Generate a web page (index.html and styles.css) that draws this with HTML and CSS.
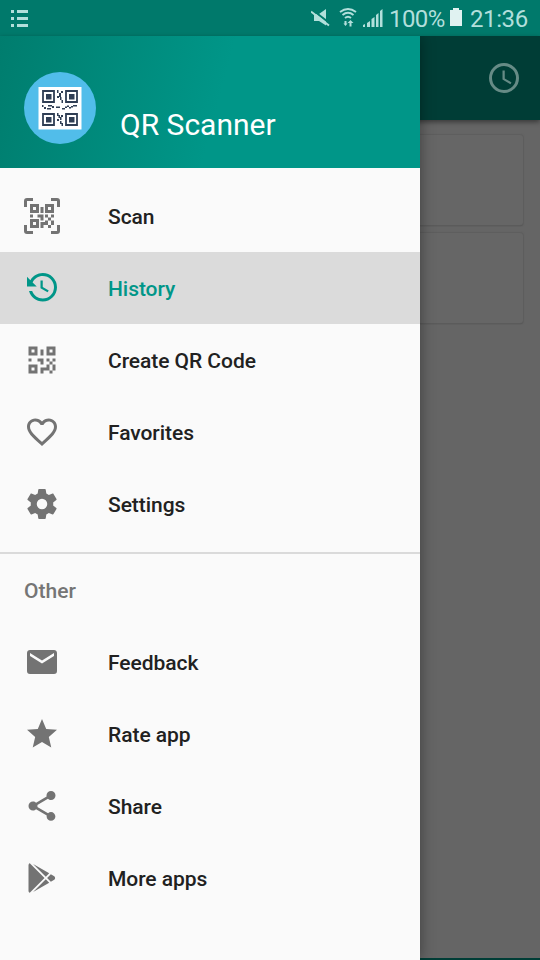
FILE: index.html
```html
<!DOCTYPE html>
<html lang="en">
<head>
<meta charset="utf-8">
<title>QR Scanner</title>
<link rel="stylesheet" href="styles.css">
</head>
<body>
<div class="phone">
  <header class="status">
    <svg class="status-list" width="20" height="18" viewBox="0 0 20 18" fill="currentColor"><path d="M0 0h3v3H0zM6 0h11v3H6zM0 7h3v3H0zM6 7h11v3H6zM0 14h3v3H0zM6 14h11v3H6z"/></svg>
    <svg class="status-icons" width="76" height="24" viewBox="0 0 76 24">
      <g fill="currentColor">
        <path d="M3 8h5l7-5v16.500L8 15H3z"/>
        <path d="M52 21v-2l2-1v3zM56 21v-4l3-2v6zM60.500 21v-8l3-2v10zM65 21V9l2.500-2v14zM69 21V5l2.500-2v18z"/>
        <path d="M39.500 14l3 3h-2v3.500h-2V17h-2zM34.500 20l-2-2.500h1V15h2v2.500h1z"/>
      </g>
      <path d="M1 3.500l18 14" stroke="#00796b" stroke-width="2"/>
      <g fill="none" stroke="currentColor" stroke-width="1.900"><path d="M0 5.500l18 14"/><path d="M29 6q8-6 16 0M31.500 9q5.500-4.500 11 0M34 12q3-2.500 6 0"/></g>
    </svg>
    <span class="percent">100%</span>
    <svg class="battery" width="12" height="18" viewBox="0 0 12 18" fill="#e0f2f1"><path d="M3 0h6v2h3v16H0V2h3z"/></svg>
    <span class="time">21:36</span>
  </header>
  <div class="stage">
    <main class="page">
      <div class="toolbar">
        <svg width="36" height="36" viewBox="0 0 24 24" fill="currentColor"><path d="M12,20A8,8 0 0,0 20,12A8,8 0 0,0 12,4A8,8 0 0,0 4,12A8,8 0 0,0 12,20M12,2A10,10 0 0,1 22,12A10,10 0 0,1 12,22A10,10 0 0,1 2,12A10,10 0 0,1 12,2M12.500,7V12.250L17,14.920L16.250,16.150L11,13V7H12.500Z"/></svg>
      </div>
      <div class="cards"><div class="card"></div><div class="card"></div></div>
      <div class="bottom-edge"></div>
    </main>
    <aside class="drawer">
      <div class="profile">
        <svg width="72" height="72" viewBox="0 0 72 72">
          <circle cx="36" cy="36" r="36" fill="#51bdea"/>
          <path fill="#fff" d="M14.500 15h43v42.500h-43z"/>
          <g fill="none" stroke="#2f3e54" stroke-width="1.800"><path d="M19 19h11v11H19zM42 19h11v11H42zM19 42h11v11H19zM42 42h11v11H42z"/></g>
          <g fill="#2f3e54"><path d="M22 22h5.500v5.500H22zM45 22h5.500v5.500H45zM22 45h5.500v5.500H22zM45 45h5.500v5.500H45z"/>
          <path d="M33 18h1.500v3H33zM37 19h2v2h-2zM35 21h2v4h-2zM33 24h2v2h-2zM36 25h1.500v3H36zM37.500 28H39v3h-1.500zM33 41h1.500v3H33zM34.500 43H36v3h-1.500zM37 43h2v2h-2zM36 45h1.500v3H36zM33 47h2v2h-2zM36 49h1.500v3H36zM37.500 51H39v3h-1.500z"/>
          <path d="M18 33h1.500v2H18zM20 35h2v2h-2zM23 36h4v1.500h-4zM24 33h4v1.500h-4zM28 34h2v2h-2zM32 34.500h4V36h-4zM38 36h3v1.500h-3zM41 34.500h2V36h-2zM43 33.500h2V35h-2zM45 35h2v1.500h-2zM47 34h2v1.500h-2zM49 33h4v1.500h-4z"/></g>
        </svg>
        <h1>QR Scanner</h1>
      </div>
      <nav class="menu">
        <a class="item"><svg viewBox="0 0 24 24"><path d="M4,4H10V10H4V4M20,4V10H14V4H20M14,15H16V13H14V11H16V13H18V11H20V13H18V15H20V18H18V20H16V18H13V20H11V16H14V15M16,15V18H18V15H16M4,20V14H10V20H4M6,6V8H8V6H6M16,6V8H18V6H16M6,16V18H8V16H6M4,11H6V13H4V11M9,11H13V15H11V13H9V11M11,6H13V10H11V6M2,2V6H0V2A2,2 0 0,1 2,0H6V2H2M22,0A2,2 0 0,1 24,2V6H22V2H18V0H22M2,18V22H6V24H2A2,2 0 0,1 0,22V18H2M22,22V18H24V22A2,2 0 0,1 22,24H18V22H22Z"/></svg><span>Scan</span></a>
        <a class="item active"><svg viewBox="0 0 24 24"><path d="M11,7V12.110L15.710,14.900L16.500,13.620L12.500,11.250V7M12.500,2C8.970,2 5.910,3.920 4.270,6.770L2,4.500V11H8.500L5.750,8.250C6.960,5.730 9.500,4 12.500,4A7.500,7.500 0 0,1 20,11.500A7.500,7.500 0 0,1 12.500,19C9.230,19 6.470,16.910 5.440,14H3.340C4.440,18.030 8.110,21 12.500,21C17.740,21 22,16.750 22,11.500A9.500,9.500 0 0,0 12.500,2Z"/></svg><span>History</span></a>
        <a class="item"><svg viewBox="0 0 24 24"><path d="M3,11H5V13H3V11M11,5H13V9H11V5M9,11H13V15H11V13H9V11M15,11H17V13H19V11H21V13H19V15H21V19H19V21H17V19H13V21H11V17H15V15H17V13H15V11M19,19V15H17V19H19M15,3H21V9H15V3M17,5V7H19V5H17M3,3H9V9H3V3M5,5V7H7V5H5M3,15H9V21H3V15M5,17V19H7V17H5Z"/></svg><span>Create QR Code</span></a>
        <a class="item"><svg viewBox="0 0 24 24"><path d="M12.100,18.550L12,18.650L11.890,18.550C7.140,14.240 4,11.390 4,8.500C4,6.500 5.500,5 7.500,5C9.040,5 10.540,6 11.070,7.360H12.930C13.460,6 14.960,5 16.500,5C18.500,5 20,6.500 20,8.500C20,11.390 16.860,14.240 12.100,18.550M16.500,3C14.760,3 13.090,3.810 12,5.080C10.910,3.810 9.240,3 7.500,3C4.420,3 2,5.410 2,8.500C2,12.270 5.400,15.360 10.550,20.030L12,21.350L13.450,20.030C18.600,15.360 22,12.270 22,8.500C22,5.410 19.580,3 16.500,3Z"/></svg><span>Favorites</span></a>
        <a class="item"><svg viewBox="0 0 24 24"><path d="M12,15.500A3.500,3.500 0 0,1 8.500,12A3.500,3.500 0 0,1 12,8.500A3.500,3.500 0 0,1 15.500,12A3.500,3.500 0 0,1 12,15.500M19.430,12.970C19.470,12.650 19.500,12.330 19.500,12C19.500,11.670 19.470,11.340 19.430,11L21.540,9.370C21.730,9.220 21.780,8.950 21.660,8.730L19.660,5.270C19.540,5.050 19.270,4.960 19.050,5.050L16.560,6.050C16.040,5.660 15.500,5.320 14.870,5.070L14.500,2.420C14.460,2.180 14.250,2 14,2H10C9.750,2 9.540,2.180 9.500,2.420L9.130,5.070C8.500,5.320 7.960,5.660 7.440,6.050L4.950,5.050C4.730,4.960 4.460,5.050 4.340,5.270L2.340,8.730C2.210,8.950 2.270,9.220 2.460,9.370L4.570,11C4.530,11.340 4.500,11.670 4.500,12C4.500,12.330 4.530,12.650 4.570,12.970L2.460,14.630C2.270,14.780 2.210,15.050 2.340,15.270L4.340,18.730C4.460,18.950 4.730,19.030 4.950,18.950L7.440,17.940C7.960,18.340 8.500,18.680 9.130,18.930L9.500,21.580C9.540,21.820 9.750,22 10,22H14C14.250,22 14.460,21.820 14.500,21.580L14.870,18.930C15.500,18.670 16.040,18.340 16.560,17.940L19.050,18.950C19.270,19.030 19.540,18.950 19.660,18.730L21.660,15.270C21.780,15.050 21.730,14.780 21.540,14.630L19.430,12.970Z"/></svg><span>Settings</span></a>
      </nav>
      <section class="other">
        <h2>Other</h2>
        <a class="item"><svg viewBox="0 0 24 24"><path d="M20,8L12,13L4,8V6L12,11L20,6M20,4H4C2.890,4 2,4.890 2,6V18A2,2 0 0,0 4,20H20A2,2 0 0,0 22,18V6C22,4.890 21.100,4 20,4Z"/></svg><span>Feedback</span></a>
        <a class="item"><svg viewBox="0 0 24 24"><path d="M12,17.270L18.180,21L16.540,13.970L22,9.240L14.810,8.620L12,2L9.190,8.620L2,9.240L7.450,13.970L5.820,21L12,17.270Z"/></svg><span>Rate app</span></a>
        <a class="item"><svg viewBox="0 0 24 24"><path d="M18,16.080C17.240,16.080 16.560,16.380 16.040,16.850L8.910,12.700C8.960,12.470 9,12.240 9,12C9,11.760 8.960,11.530 8.910,11.300L15.960,7.190C16.500,7.690 17.210,8 18,8A3,3 0 0,0 21,5A3,3 0 0,0 18,2A3,3 0 0,0 15,5C15,5.240 15.040,5.470 15.090,5.700L8.040,9.810C7.500,9.310 6.790,9 6,9A3,3 0 0,0 3,12A3,3 0 0,0 6,15C6.790,15 7.500,14.690 8.040,14.190L15.160,18.340C15.110,18.550 15.080,18.770 15.080,19C15.080,20.610 16.390,21.910 18,21.910C19.610,21.910 20.920,20.610 20.920,19A2.920,2.920 0 0,0 18,16.080Z"/></svg><span>Share</span></a>
        <a class="item"><svg viewBox="0 0 24 24"><path d="M3,20.500V3.500C3,2.910 3.340,2.390 3.840,2.150L13.690,12L3.840,21.850C3.340,21.600 3,21.090 3,20.500M16.810,15.120L6.050,21.340L14.540,12.850L16.810,15.120M20.160,10.810C20.500,11.080 20.750,11.500 20.750,12C20.750,12.500 20.530,12.900 20.180,13.180L17.890,14.500L15.390,12L17.890,9.500L20.160,10.810M6.050,2.660L16.810,8.880L14.540,11.150L6.050,2.660Z"/></svg><span>More apps</span></a>
      </section>
    </aside>
  </div>
</div>
</body>
</html>
```
FILE: styles.css
```css
* { box-sizing: border-box; }
body { margin: 0; font-family: Roboto, sans-serif; }
.phone { width: 540px; height: 960px; overflow: hidden; display: flex; flex-direction: column; }
.status { height: 36px; flex: none; display: flex; align-items: center; background: #00796b; color: #b2dfdb; font-size: 24px; line-height: 36px; }
.status svg { flex: none; }
.status-list { margin: 1px 0 0 11px; }
.status-icons { margin: 0 0 0 280px; }
.percent { width: 61px; padding: 2px 0 0 2px; letter-spacing: -.6px; }
.status .battery { margin: 0 8px 2px 2px; }
.time { padding-top: 2px; letter-spacing: -.4px; }
.stage { position: relative; flex: 1; }
.page { height: 100%; display: flex; flex-direction: column; background: #656565; }
.toolbar { height: 84px; display: flex; align-items: center; justify-content: flex-end; padding-right: 18px; background: #003d36; color: #668b86; box-shadow: 0 2px 5px rgba(0, 0, 0, .45); }
.cards { flex: 1; padding: 15px 17px 0 12px; display: flex; flex-direction: column; gap: 8px; }
.card { height: 90px; border-radius: 3px; background: #666; box-shadow: 0 0 1px 1px #5e5e5e, 0 1px 1px #444; }
.bottom-edge { height: 2px; background: #003d36; }
.drawer { position: absolute; left: 0; top: 0; bottom: 0; width: 420px; background: #fafafa; box-shadow: 0 0 14px rgba(0, 0, 0, .4); clip-path: inset(0 -20px 0 0); }
.profile { height: 132px; display: flex; align-items: center; padding: 12px 24px 0; gap: 24px; background: linear-gradient(105deg, #007d6e 0%, #009688 52%, #009688 100%); }
.profile h1 { margin: 34px 0 0; color: #fff; font-size: 30px; font-weight: 400; line-height: 36px; }
.menu { padding: 12px 0; }
.item { height: 72px; padding: 0 24px; display: flex; align-items: center; gap: 48px; font-size: 21px; font-weight: 500; letter-spacing: -.05px; color: #212121; }
.item svg { width: 36px; height: 36px; fill: #737373; }
.item span { padding-top: 1px; }
.active { background: #dbdbdb; color: #009688; }
.active svg { fill: #009688; }
.other { border-top: 2px solid #dadada; }
.other h2 { margin: 0; padding: 1px 24px 0; height: 72px; line-height: 72px; font-size: 21px; font-weight: 500; color: #757575; }
```
